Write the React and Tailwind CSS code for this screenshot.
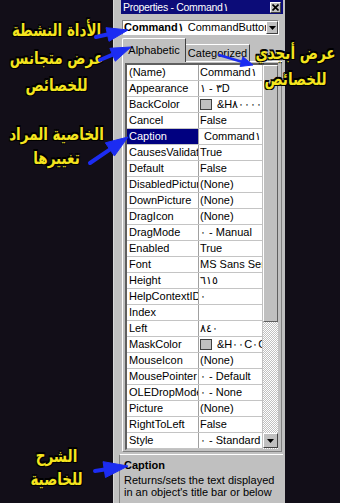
import React from 'react'

const LRM = '\u200E'

const rows = [
  { name: '(Name)', value: 'Command١' },
  { name: 'Appearance', value: `١${LRM} - ٣D` },
  { name: 'BackColor', value: '&H٨٠٠٠٠٠٠F&', swatch: true },
  { name: 'Cancel', value: 'False' },
  { name: 'Caption', value: 'Command١', selected: true },
  { name: 'CausesValidation', value: 'True' },
  { name: 'Default', value: 'False' },
  { name: 'DisabledPicture', value: '(None)' },
  { name: 'DownPicture', value: '(None)' },
  { name: 'DragIcon', value: '(None)' },
  { name: 'DragMode', value: `٠${LRM} - Manual` },
  { name: 'Enabled', value: 'True' },
  { name: 'Font', value: 'MS Sans Serif' },
  { name: 'Height', value: '٦١٥' },
  { name: 'HelpContextID', value: '٠' },
  { name: 'Index', value: '' },
  { name: 'Left', value: '٨٤٠' },
  { name: 'MaskColor', value: '&H٠٠C٠C٠C٠&', swatch: true },
  { name: 'MouseIcon', value: '(None)' },
  { name: 'MousePointer', value: `٠${LRM} - Default` },
  { name: 'OLEDropMode', value: `٠${LRM} - None` },
  { name: 'Picture', value: '(None)' },
  { name: 'RightToLeft', value: 'False' },
  { name: 'Style', value: `٠${LRM} - Standard` },
]

// blue callout arrow: shaft + wedge head, points computed from the ends
function Arrow({ x1, y1, x2, y2, head = 20, half = 7, w = 4 }) {
  const dx = x2 - x1
  const dy = y2 - y1
  const len = Math.hypot(dx, dy)
  const ux = dx / len
  const uy = dy / len
  const bx = x2 - ux * head
  const by = y2 - uy * head
  const pts = `${x2},${y2} ${bx - uy * half},${by + ux * half} ${bx + uy * half},${by - ux * half}`
  return (
    <g fill="#1c2cf2" stroke="#1c2cf2">
      <line x1={x1} y1={y1} x2={bx + ux * 2} y2={by + uy * 2} strokeWidth={w} strokeLinecap="round" />
      <polygon points={pts} strokeWidth={1} strokeLinejoin="round" />
    </g>
  )
}

function Label({ children, className = '' }) {
  return (
    <div
      dir="rtl"
      className={`h-[20px] leading-[20px] text-[13.5px] scale-y-[1.3] font-bold text-[#f4e41e] whitespace-nowrap font-['DejaVu_Sans',sans-serif] [text-shadow:1px_1px_0_#000,-1px_-1px_0_#000,1px_-1px_0_#000,-1px_1px_0_#000] ${className}`}
    >
      {children}
    </div>
  )
}

function DropButton({ className = '' }) {
  return (
    <div className={`flex items-center justify-center bg-[#c0c0c0] border border-t-white border-l-white border-r-[#404040] border-b-[#404040] ${className}`}>
      <svg width="7" height="4" viewBox="0 0 7 4">
        <path d="M0 0h7L3.5 4z" fill="#000" />
      </svg>
    </div>
  )
}

function Row({ name, value, swatch, selected }) {
  return (
    <div className="flex h-[16px] border-b border-[#c4c4c4]">
      <div
        className={`w-[72px] shrink-0 pl-[2px] border-r border-[#a0a0a0] overflow-hidden whitespace-nowrap leading-[15px] ${
          selected ? 'bg-[#000080] text-white' : ''
        }`}
      >
        {name}
      </div>
      <div className={`flex-1 min-w-0 flex items-center overflow-hidden whitespace-nowrap leading-[15px] ${selected ? 'pl-[5px]' : 'pl-[1px]'}`}>
        {swatch && <div className="w-[12px] h-[11px] shrink-0 mr-[5px] bg-[#c0c0c0] border border-[#404040]" />}
        {value}
      </div>
    </div>
  )
}

function PropertiesWindow() {
  return (
    <div className="w-[172px] h-full shrink-0 bg-[#c0c0c0] flex flex-col pl-[7px] pr-[2px] border-l border-[#d8d8d8] text-[11px] text-black">
      {/* title bar */}
      <div className="h-[14px] bg-[#0c0c78] flex items-center justify-between pl-[2px] pr-[2px]">
        <span className="text-white text-[10.5px] tracking-[-0.3px] leading-none">Properties - Command١</span>
        <div className="w-[11px] h-[11px] flex items-center justify-center bg-[#c0c0c0] border border-t-white border-l-white border-r-[#404040] border-b-[#404040]">
          <svg width="7" height="7" viewBox="0 0 7 7">
            <path d="M0.5 0.5l6 6M6.5 0.5l-6 6" stroke="#000" strokeWidth="1.6" />
          </svg>
        </div>
      </div>

      {/* object combo */}
      <div className="mt-[6px] ml-[1px] mr-[4px] h-[15px] flex bg-white border border-t-[#808080] border-l-[#808080] border-r-white border-b-white">
        <div className="flex-1 min-w-0 flex items-center overflow-hidden whitespace-nowrap pl-[1px] leading-none">
          <span className="font-bold">Command١</span>
          <span className="ml-[4px]">CommandButton</span>
        </div>
        <DropButton className="w-[12px] h-[13px]" />
      </div>

      {/* tabs */}
      <div className="mt-[3px] ml-[1px] mr-[1px] h-[24px] flex items-end">
        <div className="w-[64px] h-[24px] flex items-center justify-center border-t border-l border-r border-t-white border-l-white border-r-[#404040] rounded-tl-[2px]">
          Alphabetic
        </div>
        <div className="w-[64px] h-[18px] flex items-center justify-center border-t border-r border-b border-t-white border-r-[#404040] border-b-white">
          Categorized
        </div>
        <div className="flex-1 h-full border-b border-white" />
      </div>

      {/* tab panel with grid */}
      <div className="ml-[1px] mr-[1px] pt-[1px] pl-[2px] pr-[4px] pb-[1px] border-l border-b border-r border-l-white border-b-[#808080] border-r-[#808080]">
        <div className="w-[153px] flex border-t-2 border-l-2 border-b border-t-[#606060] border-l-[#606060] border-b-[#c0c0c0] bg-white">
          <div className="flex-1 min-w-0 flex flex-col">
            {rows.map((r) => (
              <Row key={r.name} {...r} />
            ))}
          </div>
          {/* scrollbar */}
          <div className="w-[16px] shrink-0 flex flex-col border-l border-[#c0c0c0]">
            <div className="h-[257px] bg-[#c0c0c0] border border-t-white border-l-white border-r-[#606060] border-b-[#606060]" />
            <div className="h-[111px] bg-[repeating-conic-gradient(#ffffff_0_25%,#c0c0c0_0_50%)] bg-[length:2px_2px]" />
            <div className="h-[16px] flex items-start bg-[repeating-conic-gradient(#ffffff_0_25%,#c0c0c0_0_50%)] bg-[length:2px_2px]">
              <DropButton className="w-[15px] h-[15px]" />
            </div>
          </div>
        </div>
      </div>

      {/* description pane */}
      <div className="mt-[2px] -ml-[2px] flex-1 pt-[4px] pl-[4px] border-t border-l border-t-white border-l-[#808080] leading-[12px] whitespace-nowrap overflow-hidden">
        <div className="font-bold">Caption</div>
        <div className="mt-[3px]">Returns/sets the text displayed</div>
        <div>in an object's title bar or below</div>
      </div>
    </div>
  )
}

export default function App() {
  return (
    <div className="relative w-[340px] h-[503px] overflow-hidden bg-[#120e18] flex font-['Liberation_Sans',Arial,sans-serif]">
      {/* left callouts */}
      <div className="w-[113px] shrink-0 flex flex-col items-center">
        <Label className="mt-[19px]">الأداة النشطة</Label>
        <Label className="mt-[8px]">عرض متجانس</Label>
        <Label className="mt-[7px]">للخصائص</Label>
        <Label className="mt-[29px]">الخاصية المراد</Label>
        <Label className="mt-[4px]">تغييرها</Label>
        <Label className="mt-auto">الشرح</Label>
        <Label className="mt-[3px] mb-[15px]">للخاصية</Label>
      </div>

      <PropertiesWindow />
      <div className="flex-1" />

      {/* right callout sits over the window edge */}
      <div className="absolute left-[251px] top-[42px] w-[89px] flex flex-col items-center">
        <Label>عرض أبجدي</Label>
        <Label className="mt-[6px]">للخصائص</Label>
      </div>

      <svg className="absolute inset-0 pointer-events-none" width="340" height="503" viewBox="0 0 340 503">
        <Arrow x1={96} y1={37} x2={128} y2={30} head={21} half={7} w={4} />
        <Arrow x1={100} y1={60} x2={131} y2={47} head={20} half={7} w={4} />
        <Arrow x1={219} y1={55} x2={253} y2={65} head={12} half={5} w={2.5} />
        <Arrow x1={90} y1={163} x2={128} y2={137} head={22} half={8} w={4} />
        <Arrow x1={95} y1={471} x2={128} y2={466} head={24} half={8} w={4} />
      </svg>
    </div>
  )
}
